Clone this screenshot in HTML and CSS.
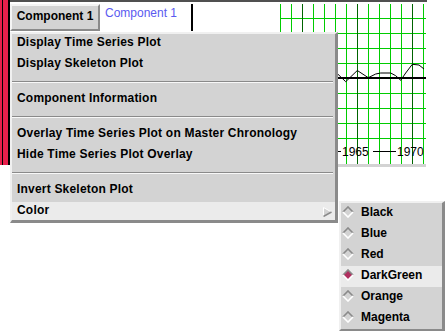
FILE: index.html
```html
<!DOCTYPE html>
<html>
<head>
<meta charset="utf-8">
<link rel="stylesheet" href="styles.css">
</head>
<body>
<div class="window">
  <div class="frame-edge"><div class="e1"></div><div class="e2"></div><div class="e3"></div><div class="e4"></div></div>
  <div class="main">
    <div class="toolbar">
      <div class="button">Component 1</div>
      <div class="field"><span class="field-text">Component 1</span></div>
      <div class="cursor"></div>
      <div class="spacer"></div>
      <svg class="canvas" width="146" height="165" viewBox="0 0 146 165">
        <g stroke="#00cc00" stroke-width="1" shape-rendering="crispEdges">
          <line x1="0" y1="16.5" x2="146" y2="16.5"/>
          <line x1="0" y1="31.5" x2="146" y2="31.5"/>
          <line x1="0" y1="46.5" x2="146" y2="46.5"/>
          <line x1="0" y1="61.5" x2="146" y2="61.5"/>
          <line x1="0" y1="76.5" x2="146" y2="76.5"/>
          <line x1="0" y1="91.5" x2="146" y2="91.5"/>
          <line x1="0" y1="106.5" x2="146" y2="106.5"/>
          <line x1="0" y1="121.5" x2="146" y2="121.5"/>
          <line x1="0" y1="136.5" x2="146" y2="136.5"/>
          <line x1="0.5" y1="2" x2="0.5" y2="162"/>
          <line x1="11.5" y1="2" x2="11.5" y2="162"/>
          <line x1="33.5" y1="2" x2="33.5" y2="162"/>
          <line x1="44.5" y1="2" x2="44.5" y2="162"/>
          <line x1="55.5" y1="2" x2="55.5" y2="162"/>
          <line x1="66.5" y1="2" x2="66.5" y2="162"/>
          <line x1="88.5" y1="2" x2="88.5" y2="162"/>
          <line x1="99.5" y1="2" x2="99.5" y2="162"/>
          <line x1="110.5" y1="2" x2="110.5" y2="162"/>
          <line x1="121.5" y1="2" x2="121.5" y2="162"/>
          <line x1="143.5" y1="2" x2="143.5" y2="162"/>
        </g>
        <g stroke="#006400" stroke-width="1" shape-rendering="crispEdges">
          <line x1="22.5" y1="2" x2="22.5" y2="162"/>
          <line x1="77.5" y1="2" x2="77.5" y2="162"/>
          <line x1="132.5" y1="2" x2="132.5" y2="162"/>
        </g>
        <rect x="56" y="75" width="90" height="2" fill="#000" shape-rendering="crispEdges"/>
        <polyline fill="none" stroke="#000" stroke-width="1" points="56.7,71 65.7,79.7 77.3,68.5 88.3,75.7 95.7,72 100.7,71 110.7,71 115.7,73.7 120.7,78.3 125.7,71 132.3,62.3 139,63 144,67"/>
        <g stroke="#000" shape-rendering="crispEdges">
          <line x1="56" y1="149.5" x2="61" y2="149.5"/>
          <line x1="93" y1="149.5" x2="116" y2="149.5"/>
        </g>
        <rect x="57" y="162" width="89" height="3" fill="#d3d3d3"/>
        <text x="62" y="154" class="axis">1965</text>
        <text x="117" y="154" class="axis">1970</text>
      </svg>
      <div class="after"></div>
    </div>
  </div>
</div>

<div class="menu">
  <div class="item">Display Time Series Plot</div>
  <div class="item">Display Skeleton Plot</div>
  <div class="sep"><div class="etch"></div></div>
  <div class="item">Component Information</div>
  <div class="sep"><div class="etch"></div></div>
  <div class="item">Overlay Time Series Plot on Master Chronology</div>
  <div class="item">Hide Time Series Plot Overlay</div>
  <div class="sep"><div class="etch"></div></div>
  <div class="item">Invert Skeleton Plot</div>
  <div class="item cascade armed"><span>Color</span>
    <svg class="arrow" width="9" height="10" viewBox="0 0 9 10">
      <polygon points="0.5,0.5 8.5,5 0.5,9.5" fill="#d3d3d3"/>
      <polyline points="0.5,9.5 0.5,0.5 8.5,5" fill="none" stroke="#ffffff" stroke-width="1"/>
      <polyline points="8.5,5 0.5,9.5" fill="none" stroke="#8a8a8a" stroke-width="1.5"/>
    </svg>
  </div>
</div>

<div class="submenu">
  <div class="opt"><svg class="diamond" width="12" height="12" viewBox="0 0 12 12"><polygon points="6,1 11,6 6,11 1,6" fill="#d3d3d3"/><polyline points="1,6 6,1 11,6" fill="none" stroke="#8a8a8a" stroke-width="1.6"/><polyline points="1,6 6,11 11,6" fill="none" stroke="#ffffff" stroke-width="1.6"/></svg><span>Black</span></div>
  <div class="opt"><svg class="diamond" width="12" height="12" viewBox="0 0 12 12"><polygon points="6,1 11,6 6,11 1,6" fill="#d3d3d3"/><polyline points="1,6 6,1 11,6" fill="none" stroke="#8a8a8a" stroke-width="1.6"/><polyline points="1,6 6,11 11,6" fill="none" stroke="#ffffff" stroke-width="1.6"/></svg><span>Blue</span></div>
  <div class="opt"><svg class="diamond" width="12" height="12" viewBox="0 0 12 12"><polygon points="6,1 11,6 6,11 1,6" fill="#d3d3d3"/><polyline points="1,6 6,1 11,6" fill="none" stroke="#8a8a8a" stroke-width="1.6"/><polyline points="1,6 6,11 11,6" fill="none" stroke="#ffffff" stroke-width="1.6"/></svg><span>Red</span></div>
  <div class="opt armed"><svg class="diamond" width="12" height="12" viewBox="0 0 12 12"><polygon points="6,1 11,6 6,11 1,6" fill="#b03060"/><polyline points="1,6 6,1 11,6" fill="none" stroke="#8a8a8a" stroke-width="1.6"/><polyline points="1,6 6,11 11,6" fill="none" stroke="#ffffff" stroke-width="1.6"/></svg><span>DarkGreen</span></div>
  <div class="opt"><svg class="diamond" width="12" height="12" viewBox="0 0 12 12"><polygon points="6,1 11,6 6,11 1,6" fill="#d3d3d3"/><polyline points="1,6 6,1 11,6" fill="none" stroke="#8a8a8a" stroke-width="1.6"/><polyline points="1,6 6,11 11,6" fill="none" stroke="#ffffff" stroke-width="1.6"/></svg><span>Orange</span></div>
  <div class="opt"><svg class="diamond" width="12" height="12" viewBox="0 0 12 12"><polygon points="6,1 11,6 6,11 1,6" fill="#d3d3d3"/><polyline points="1,6 6,1 11,6" fill="none" stroke="#8a8a8a" stroke-width="1.6"/><polyline points="1,6 6,11 11,6" fill="none" stroke="#ffffff" stroke-width="1.6"/></svg><span>Magenta</span></div>
</div>
</body>
</html>
```

FILE: styles.css
```css
html, body {
  margin: 0;
  padding: 0;
  background: #ffffff;
  width: 446px;
  height: 333px;
  overflow: hidden;
  font-family: "Liberation Sans", Arial, sans-serif;
}

.window {
  display: flex;
  align-items: flex-start;
}

.frame-edge {
  display: flex;
  height: 165px;
  width: 10px;
}
.frame-edge .e1 { width: 2px; background: #e8204c; }
.frame-edge .e2 { width: 1px; background: #000000; }
.frame-edge .e3 { width: 5px; background: #e8204c; }
.frame-edge .e4 { width: 2px; background: #000000; }

.main {
  width: 417px;
  border-top: 2px solid #505050;
}

.toolbar {
  display: flex;
  align-items: flex-start;
}

.button {
  box-sizing: border-box;
  margin-top: 2px;
  width: 90px;
  height: 27px;
  background: #d3d3d3;
  border-top: 2px solid #f4f4f4;
  border-left: 2px solid #f4f4f4;
  border-right: 2px solid #8a8a8a;
  border-bottom: 2px solid #8a8a8a;
  font-weight: bold;
  font-size: 12px;
  line-height: 21px;
  text-align: center;
  color: #000;
}

.field {
  width: 91px;
  padding-left: 5px;
  padding-top: 4px;
  box-sizing: border-box;
  height: 20px;
}
.field-text {
  font-size: 12px;
  color: #5a5af0;
  line-height: 14px;
  display: block;
}

.cursor {
  margin-top: 2px;
  width: 2px;
  height: 27px;
  background: #000;
}

.spacer {
  width: 87px;
}

.canvas {
  display: block;
  margin-top: 0px;
}

.axis {
  font-family: "Liberation Sans", Arial, sans-serif;
  font-size: 12px;
  fill: #000;
}

.menu {
  position: absolute;
  left: 10px;
  top: 32px;
  width: 328px;
  box-sizing: border-box;
  background: #d3d3d3;
  border-top: 2px solid #f0f0f0;
  border-left: 2px solid #f0f0f0;
  border-right: 3px solid #8a8a8a;
  border-bottom: 3px solid #8a8a8a;
  font-weight: bold;
  font-size: 12px;
  letter-spacing: 0.2px;
  color: #000;
}

.item {
  height: 21px;
  line-height: 17px;
  padding-left: 5px;
  white-space: nowrap;
}

.sep {
  height: 14px;
  box-sizing: border-box;
  padding-top: 5px;
}
.etch {
  border-top: 1px solid #8a8a8a;
  border-bottom: 1px solid #f8f8f8;
  margin-right: 2px;
}

.cascade {
  height: 18px;
  display: flex;
  justify-content: space-between;
  align-items: flex-start;
  padding-right: 3px;
}
.armed {
  background: #ebebeb;
}
.arrow {
  margin-top: 5px;
}

.submenu {
  position: absolute;
  left: 339px;
  top: 201px;
  width: 106px;
  box-sizing: border-box;
  background: #d3d3d3;
  border-top: 2px solid #f0f0f0;
  border-left: 2px solid #f0f0f0;
  border-right: 3px solid #8a8a8a;
  border-bottom: 2px solid #8a8a8a;
  font-weight: bold;
  font-size: 12px;
  color: #000;
}

.opt {
  height: 21px;
  line-height: 18px;
  display: flex;
  align-items: flex-start;
  white-space: nowrap;
}
.diamond {
  margin: 3px 7px 0 1px;
  flex: none;
}
```
